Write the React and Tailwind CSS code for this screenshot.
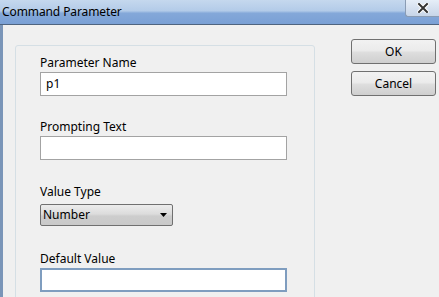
import React from 'react'

const font = { fontFamily: '"Noto Sans", "Open Sans", sans-serif' }

function Field({ label, value, focused, mt }) {
  return (
    <div className={mt}>
      <div className="text-[12px] leading-[16px] text-black h-[16px]">{label}</div>
      <div
        className={`mt-[1px] h-[24px] w-[247px] bg-white flex items-center px-[5px] text-[12px] text-black ${
          focused ? 'border-2 border-[#7f9dbf]' : 'border border-[#a3a3a3]'
        }`}
      >
        {value}
      </div>
    </div>
  )
}

export default function App() {
  return (
    <div className="w-[439px] h-[297px] overflow-hidden bg-[#f0f0f0] flex flex-col" style={font}>
      {/* title bar */}
      <div className="relative h-[25px] shrink-0 border-b border-[#4f647f] bg-[linear-gradient(180deg,#c5d8ee_0%,#b3cbe8_45%,#84a8d9_55%,#7aa0d5_100%)] flex items-center">
        <span className="pl-[2px] text-[12px] tracking-[-0.1px] text-black leading-none">Command Parameter</span>
        <div className="absolute right-0 top-0 w-[34px] h-[17px] border-l border-b border-[#8a9cb4] rounded-bl-[3px] bg-[linear-gradient(180deg,#e6eef8,#c7d5e8)] flex items-center justify-center">
          <svg width="12" height="10" viewBox="0 0 12 10">
            <path d="M2 1 L10 9 M10 1 L2 9" stroke="#fff" strokeWidth="4" strokeLinecap="square" />
            <path d="M2 1 L10 9 M10 1 L2 9" stroke="#333" strokeWidth="2" strokeLinecap="square" />
          </svg>
        </div>
      </div>

      {/* body */}
      <div className="flex flex-1 border-l-[3px] border-[#7a95b8]">
        <div className="pl-[12px] pt-[20px]">
          <div className="w-[300px] h-[270px] border border-[#d5dfe5] rounded-[3px] pl-[24px] pt-[9px]">
            <Field label="Parameter Name" value="p1" />
            <Field label="Prompting Text" value="" mt="mt-[23px]" />
            <div className="mt-[24px]">
              <div className="text-[12px] leading-[16px] text-black h-[16px]">Value Type</div>
              <div className="mt-[4px] h-[22px] w-[133px] border border-[#707070] rounded-[2px] bg-[linear-gradient(180deg,#ececec_0%,#dcdcdc_45%,#cdcdcd_55%,#c9c9c9_100%)] flex items-center justify-between pl-[2px] pr-[5px]">
                <span className="text-[12px] text-black">Number</span>
                <svg width="7" height="4" viewBox="0 0 7 4">
                  <path d="M0 0 H7 L3.5 4 Z" fill="#000" />
                </svg>
              </div>
            </div>
            <Field label="Default Value" value="" focused mt="mt-[25px]" />
          </div>
        </div>
        <div className="ml-[36px] pt-[14px] flex flex-col gap-[7px]">
          <button className="w-[85px] h-[25px] border border-[#707070] rounded-[3px] bg-[linear-gradient(180deg,#f2f2f2_0%,#ebebeb_45%,#dddddd_55%,#cfcfcf_100%)] text-[12px] text-black">
            OK
          </button>
          <button className="w-[85px] h-[25px] border border-[#707070] rounded-[3px] bg-[linear-gradient(180deg,#f2f2f2_0%,#ebebeb_45%,#dddddd_55%,#cfcfcf_100%)] text-[12px] text-black">
            Cancel
          </button>
        </div>
      </div>
    </div>
  )
}
